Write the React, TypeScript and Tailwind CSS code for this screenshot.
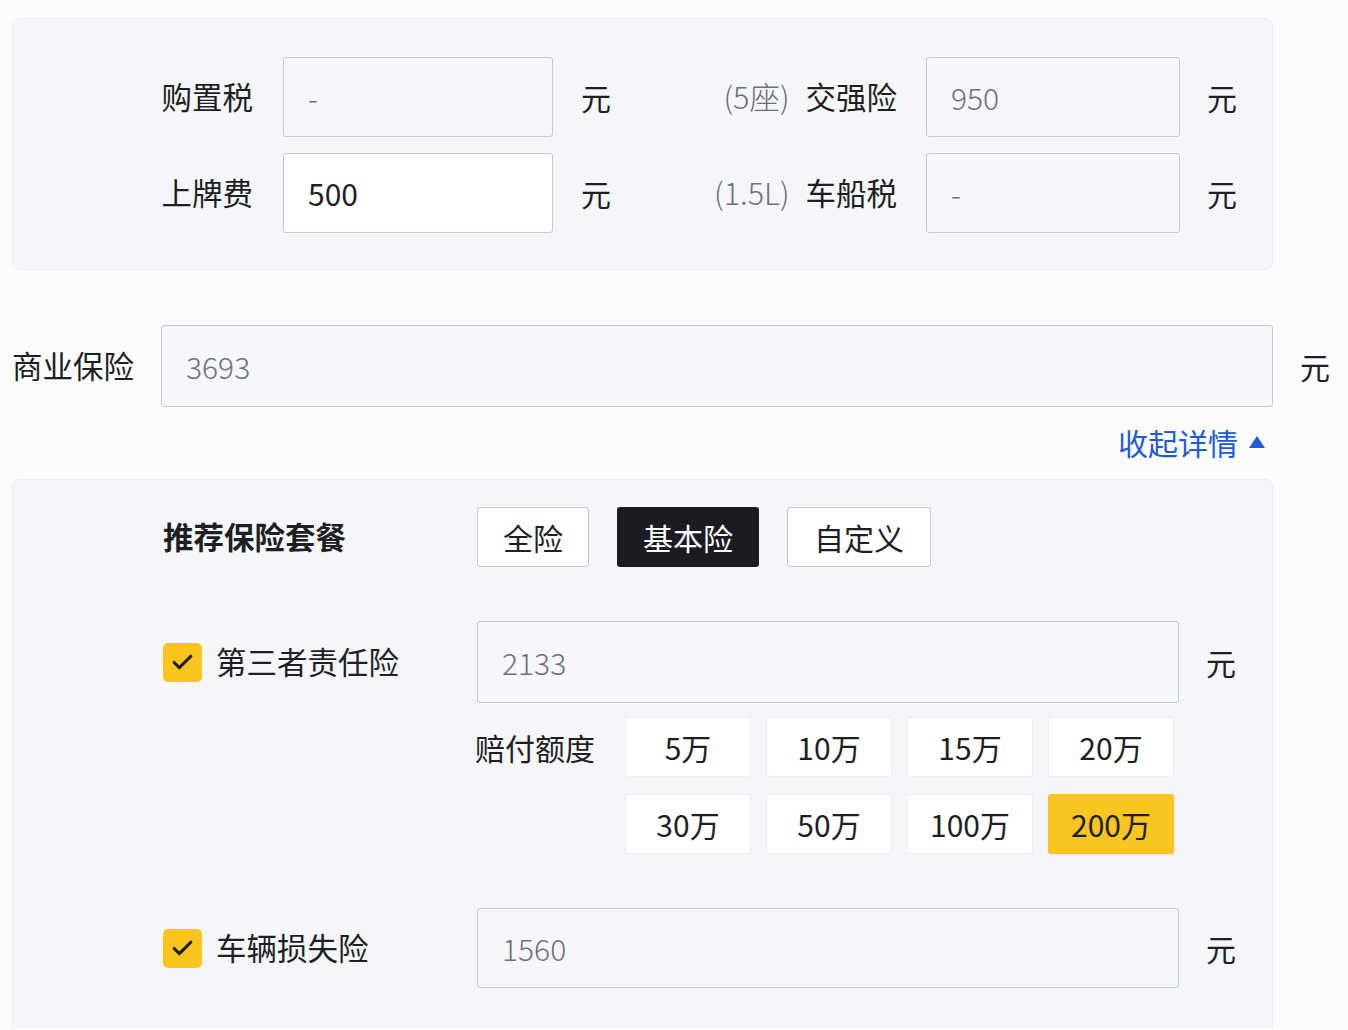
import { Check } from "lucide-react";

const font = { fontFamily: '"Noto Sans CJK SC", "Noto Sans", sans-serif' };

function Field({ value, dark, white, className }: { value: string; dark?: boolean; white?: boolean; className: string }) {
  return (
    <div
      className={`flex items-center rounded-[3px] border border-[#c6c9cf] px-6 text-[30px] ${
        white ? "bg-white" : "bg-[#f6f7fb]"
      } ${dark ? "text-[#1e1f24]" : "font-light text-[#6d707c]"} ${className}`}
    >
      {value}
    </div>
  );
}

function Yuan({ className = "" }: { className?: string }) {
  return <span className={`text-[30px] text-[#1e1f24] ${className}`}>元</span>;
}

function Checkbox() {
  return (
    <div className="flex h-[39px] w-[39px] items-center justify-center rounded-[5px] bg-[#fcc51e]">
      <Check size={25} strokeWidth={3} className="text-[#1e1f24]" />
    </div>
  );
}

const amounts = ["5万", "10万", "15万", "20万", "30万", "50万", "100万", "200万"];

export default function App() {
  return (
    <div className="min-h-screen bg-[#fbfcfd] pt-[18px] pl-3 text-[#1e1f24]" style={font}>
      {/* Tax panel */}
      <div className="h-[252px] w-[1261px] rounded-lg border border-[#eaedf1] bg-[#f4f6fa] pt-[38px]">
        <div className="flex h-[80px] items-center">
          <div className="w-[240px] text-right text-[30.5px]">购置税</div>
          <Field value="-" className="ml-[30px] h-[80px] w-[270px]" />
          <Yuan className="ml-[28px]" />
          <div className="w-[286px] text-right text-[30.5px]">
            <span className="mr-4 font-light text-[#6d707c]">(5座)</span>交强险
          </div>
          <Field value="950" className="ml-[29px] h-[80px] w-[254px]" />
          <Yuan className="ml-[27px]" />
        </div>
        <div className="mt-4 flex h-[80px] items-center">
          <div className="w-[240px] text-right text-[30.5px]">上牌费</div>
          <Field value="500" dark white className="ml-[30px] h-[80px] w-[270px]" />
          <Yuan className="ml-[28px]" />
          <div className="w-[286px] text-right text-[30.5px]">
            <span className="mr-4 font-light text-[#6d707c]">(1.5L)</span>车船税
          </div>
          <Field value="-" className="ml-[29px] h-[80px] w-[254px]" />
          <Yuan className="ml-[27px]" />
        </div>
      </div>

      {/* Commercial insurance */}
      <div className="mt-[55px] flex items-center">
        <div className="w-[149px] text-[30.5px]">商业保险</div>
        <Field value="3693" className="h-[82px] w-[1112px]" />
        <Yuan className="ml-[27px]" />
      </div>
      <div className="mt-[18px] flex h-[34px] w-[1254px] items-center justify-end text-[30px] text-[#2159d6]">
        收起详情
        <svg width="18" height="14" viewBox="0 0 18 14" className="ml-[10px]">
          <path d="M9 1 L17 13 L1 13 Z" fill="#2159d6" />
        </svg>
      </div>

      {/* Package panel */}
      <div className="mt-[20px] w-[1261px] rounded-t-lg border border-b-0 border-[#eaedf1] bg-[#f4f6fa] pt-[27px] pb-10 pl-[150px]">
        <div className="flex items-center">
          <div className="w-[314px] text-[30.5px] font-bold">推荐保险套餐</div>
          <button className="h-[60px] w-[112px] rounded-[3px] border border-[#c6c9cf] bg-white text-[30px]">全险</button>
          <button className="ml-7 h-[60px] w-[142px] rounded-[3px] bg-[#1b1c22] text-[30px] text-white">基本险</button>
          <button className="ml-7 h-[60px] w-[144px] rounded-[3px] border border-[#c6c9cf] bg-white text-[30px]">自定义</button>
        </div>

        <div className="mt-[54px] flex items-center">
          <div className="flex w-[314px] items-center">
            <Checkbox />
            <span className="ml-[14px] text-[30.5px]">第三者责任险</span>
          </div>
          <Field value="2133" className="h-[82px] w-[702px]" />
          <Yuan className="ml-[27px]" />
        </div>

        <div className="mt-[14px] flex">
          <div className="ml-[312px] flex h-[60px] w-[150px] items-center text-[30px]">赔付额度</div>
          <div className="grid grid-cols-[repeat(4,126px)] gap-x-[15px] gap-y-[17px]">
            {amounts.map((a) => (
              <div
                key={a}
                className={`flex h-[60px] items-center justify-center rounded-[3px] text-[30px] ${
                  a === "200万"
                    ? "bg-[#f9c520] shadow-[0_1px_2px_rgba(0,0,0,0.08)]"
                    : "border border-[#eceef2] bg-white"
                }`}
              >
                {a}
              </div>
            ))}
          </div>
        </div>

        <div className="mt-[54px] flex items-center">
          <div className="flex w-[314px] items-center">
            <Checkbox />
            <span className="ml-[14px] text-[30.5px]">车辆损失险</span>
          </div>
          <Field value="1560" className="h-[80px] w-[702px]" />
          <Yuan className="ml-[27px]" />
        </div>
      </div>
    </div>
  );
}
